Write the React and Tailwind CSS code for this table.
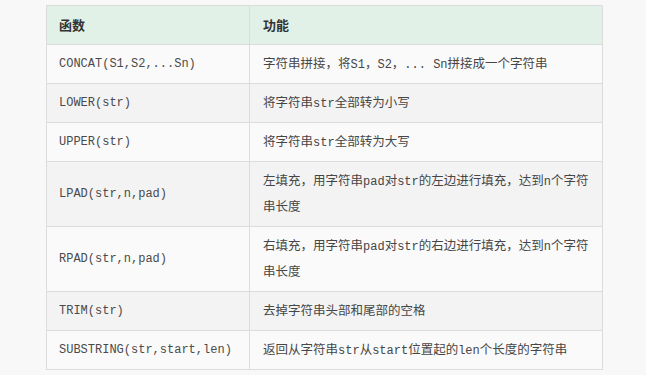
const rows = [
  { fn: 'CONCAT(S1,S2,...Sn)', desc: [['t', '字符串拼接，将'], ['c', 'S1'], ['t', '，'], ['c', 'S2'], ['t', '，'], ['c', '... Sn'], ['t', '拼接成一个字符串']] },
  { fn: 'LOWER(str)', desc: [['t', '将字符串'], ['c', 'str'], ['t', '全部转为小写']] },
  { fn: 'UPPER(str)', desc: [['t', '将字符串'], ['c', 'str'], ['t', '全部转为大写']] },
  { fn: 'LPAD(str,n,pad)', desc: [['t', '左填充，用字符串'], ['c', 'pad'], ['t', '对'], ['c', 'str'], ['t', '的左边进行填充，达到'], ['c', 'n'], ['t', '个字符串长度']] },
  { fn: 'RPAD(str,n,pad)', desc: [['t', '右填充，用字符串'], ['c', 'pad'], ['t', '对'], ['c', 'str'], ['t', '的右边进行填充，达到'], ['c', 'n'], ['t', '个字符串长度']] },
  { fn: 'TRIM(str)', desc: [['t', '去掉字符串头部和尾部的空格']] },
  { fn: 'SUBSTRING(str,start,len)', desc: [['t', '返回从字符串'], ['c', 'str'], ['t', '从'], ['c', 'start'], ['t', '位置起的'], ['c', 'len'], ['t', '个长度的字符串']] },
];

const mono = "font-['Liberation_Mono','Noto_Sans_CJK_SC',monospace]";

const App = () => {
  return (
    <div className="min-h-[375px] bg-[#f8f8f8] pt-[5px] pl-[46px] font-['Noto_Sans','Noto_Sans_CJK_SC',sans-serif] text-[#464646]">
      <table className="w-[557px] border-collapse table-fixed text-[13px] leading-[26px]">
        <colgroup>
          <col className="w-[203px]" />
          <col />
        </colgroup>
        <thead>
          <tr className="bg-[#e1f1e7]">
            <th className="border border-[#dcdcdc] h-[39px] px-[12px] text-left font-bold text-[#333]">函数</th>
            <th className="border border-[#dcdcdc] h-[39px] px-[13px] text-left font-bold text-[#333]">功能</th>
          </tr>
        </thead>
        <tbody>
          {rows.map((row, i) => (
            <tr key={row.fn} className={i % 2 === 0 ? 'bg-[#fafafa]' : 'bg-[#f3f3f3]'}>
              <td className={`border border-[#dcdcdc] px-[12px] py-[6px] text-[12px] text-[#4a4a4a] ${mono}`}>{row.fn}</td>
              <td className="border border-[#dcdcdc] pl-[13px] pr-[10px] py-[6px] text-[12.5px]">
                {row.desc.map(([kind, text], j) =>
                  kind === 'c' ? (
                    <span key={j} className={`text-[12px] leading-none ${mono}`}>{text}</span>
                  ) : (
                    <span key={j}>{text}</span>
                  )
                )}
              </td>
            </tr>
          ))}
        </tbody>
      </table>
    </div>
  );
};

export default App;
